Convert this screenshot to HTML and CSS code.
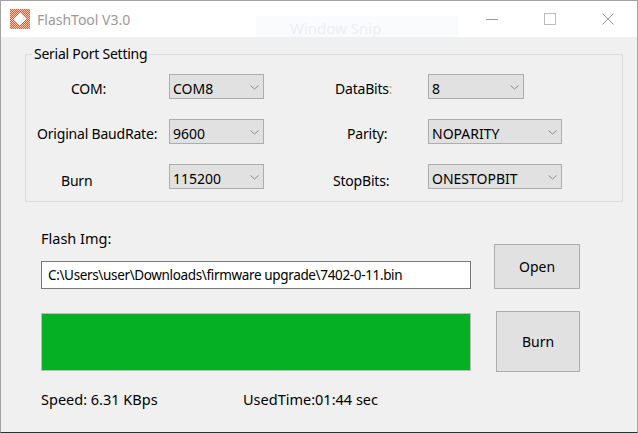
FILE: index.html
```html
<!DOCTYPE html>
<html lang="en">

<head>
    <meta charset="UTF-8">
    <title>FlashTool V3.0</title>
    <link rel="stylesheet" href="styles.css">
</head>

<body>
    <div class="window">
        <header class="titlebar">
            <svg class="app-icon" width="20" height="20" viewBox="0 0 20 20">
                <defs>
                    <pattern id="chk" width="2" height="2" patternUnits="userSpaceOnUse">
                        <rect width="2" height="2" fill="#f3c9b6"/>
                        <rect width="1" height="1" fill="#d0623f"/>
                        <rect x="1" y="1" width="1" height="1" fill="#d0623f"/>
                    </pattern>
                </defs>
                <rect x="0" y="0" width="20" height="20" fill="url(#chk)"/>
                <polygon points="10,3 17,10 10,17 3,10" fill="#fff" stroke="url(#chk)" stroke-width="1"/>
            </svg>
            <span class="title">FlashTool V3.0</span>
            <div class="snip">Window Snip</div>
            <div class="controls">
                <span class="ctl"><svg width="12" height="12" viewBox="0 0 12 12"><line x1="0" y1="6.5" x2="12" y2="6.5" stroke="#999" stroke-width="1"/></svg></span>
                <span class="ctl"><svg width="12" height="12" viewBox="0 0 12 12"><rect x="0.5" y="0.5" width="11" height="11" fill="none" stroke="#bbb" stroke-width="1"/></svg></span>
                <span class="ctl"><svg width="12" height="12" viewBox="0 0 12 12"><path d="M0.5 0.5 L11.5 11.5 M11.5 0.5 L0.5 11.5" stroke="#999" stroke-width="1"/></svg></span>
            </div>
        </header>

        <main class="client">
            <fieldset class="port">
                <legend>Serial Port Setting</legend>
                <div class="port-grid">
                    <span class="lbl l-com">COM:</span>
                    <div class="combo w-left">COM8<svg class="chev" width="9" height="5" viewBox="0 0 9 5"><polyline points="0.5,0.5 4.5,4 8.5,0.5" fill="none" stroke="#8a8a8a"/></svg></div>
                    <span class="lbl l-data">DataBits<span class="colon">:</span></span>
                    <div class="combo w-data">8<svg class="chev" width="9" height="5" viewBox="0 0 9 5"><polyline points="0.5,0.5 4.5,4 8.5,0.5" fill="none" stroke="#8a8a8a"/></svg></div>

                    <span class="lbl l-baud">Original BaudRate:</span>
                    <div class="combo w-left">9600<svg class="chev" width="9" height="5" viewBox="0 0 9 5"><polyline points="0.5,0.5 4.5,4 8.5,0.5" fill="none" stroke="#8a8a8a"/></svg></div>
                    <span class="lbl l-parity">Parity:</span>
                    <div class="combo w-wide">NOPARITY<svg class="chev" width="9" height="5" viewBox="0 0 9 5"><polyline points="0.5,0.5 4.5,4 8.5,0.5" fill="none" stroke="#8a8a8a"/></svg></div>

                    <span class="lbl l-burn low">Burn</span>
                    <div class="combo w-left">115200<svg class="chev" width="9" height="5" viewBox="0 0 9 5"><polyline points="0.5,0.5 4.5,4 8.5,0.5" fill="none" stroke="#8a8a8a"/></svg></div>
                    <span class="lbl l-stop low">StopBits:</span>
                    <div class="combo w-wide">ONESTOPBIT<svg class="chev" width="9" height="5" viewBox="0 0 9 5"><polyline points="0.5,0.5 4.5,4 8.5,0.5" fill="none" stroke="#8a8a8a"/></svg></div>
                </div>
            </fieldset>

            <section class="flash">
                <div class="flash-left">
                    <div class="flash-label">Flash Img:</div>
                    <div class="path">C:\Users\user\Downloads\firmware upgrade\7402-0-11.bin</div>
                    <div class="progress"><div class="bar" style="width: 100%"></div></div>
                    <div class="status">
                        <span class="speed">Speed: 6.31 KBps</span>
                        <span>UsedTime:01:44 sec</span>
                    </div>
                </div>
                <div class="flash-right">
                    <button class="btn btn-open">Open</button>
                    <button class="btn btn-burn">Burn</button>
                </div>
            </section>
        </main>
    </div>
</body>

</html>
```

FILE: styles.css
```css
/* General */
body {
    margin: 0;
    font-family: 'Noto Sans', 'Open Sans', sans-serif;
    font-size: 14px;
    color: #000;
}

.window {
    width: 638px;
    height: 433px;
    box-sizing: border-box;
    border: 1px solid #a3a3a3;
    border-bottom-color: #2f2f2f;
    display: flex;
    flex-direction: column;
    background-color: #f0f0f0;
}

/* Title bar */
.titlebar {
    height: 36px;
    flex: none;
    background-color: #fff;
    display: flex;
    align-items: center;
    position: relative;
}

.app-icon {
    margin-left: 9px;
}

.title {
    margin-left: 7px;
    font-size: 14px;
    color: #9a9a9a;
}

.snip {
    position: absolute;
    left: 255px;
    top: 15px;
    width: 202px;
    height: 21px;
    padding-left: 34px;
    box-sizing: border-box;
    background-color: #fafbfd;
    color: #eceef2;
    font-size: 15px;
    line-height: 24px;
}

.controls {
    margin-left: auto;
    display: flex;
    height: 100%;
}

.ctl {
    width: 58px;
    display: flex;
    align-items: center;
    justify-content: center;
}

/* Client area */
.client {
    flex: 1;
    padding: 9px 14px 0 24px;
}

.port {
    margin: 0;
    padding: 12px 0 12px 0;
    border: 1px solid #dcdcdc;
    min-width: 0;
}

.port legend {
    margin-left: 6px;
    padding: 0 2px;
    line-height: 16px;
    letter-spacing: -0.25px;
}

.port-grid {
    display: grid;
    grid-template-columns: 143px 95px 164px auto;
    grid-auto-rows: 25px;
    row-gap: 20px;
}

.lbl {
    align-self: center;
    white-space: nowrap;
    padding-top: 3px;
    letter-spacing: -0.2px;
}

.lbl.low {
    padding-top: 8px;
}

.l-com { padding-left: 45px; }
.l-baud { padding-left: 11px; }
.l-burn { padding-left: 35px; }
.l-data { padding-left: 71px; }
.l-parity { padding-left: 83px; }
.l-stop { padding-left: 69px; }

.colon {
    color: #d8a060;
}

.combo {
    height: 25px;
    box-sizing: border-box;
    border: 1px solid #adadad;
    background-color: #e1e1e1;
    display: flex;
    align-items: center;
    justify-content: space-between;
    padding: 3px 4px 0 3px;
    white-space: nowrap;
}

.chev {
    margin-top: -2px;
}

.w-left { width: 95px; }
.w-data { width: 96px; }
.w-wide { width: 134px; }

/* Flash section */
.flash {
    display: flex;
    margin-top: 27px;
    font-size: 14.5px;
}

.flash-left {
    margin-left: 16px;
    width: 430px;
}

.flash-label {
    line-height: 18px;
}

.path {
    margin-top: 14px;
    height: 28px;
    box-sizing: border-box;
    border: 1px solid #7a7a7a;
    background-color: #fff;
    padding-left: 6px;
    display: flex;
    align-items: center;
    white-space: nowrap;
    font-size: 13.5px;
    letter-spacing: -0.35px;
}

.progress {
    margin-top: 24px;
    height: 58px;
    box-sizing: border-box;
    border: 1px solid #bcbcbc;
    background-color: #e6e6e6;
}

.bar {
    height: 100%;
    background-color: #06b025;
}

.status {
    margin-top: 19px;
    line-height: 18px;
    display: flex;
}

.speed {
    width: 202px;
}

.flash-right {
    display: flex;
    flex-direction: column;
    align-items: flex-start;
    margin-top: 15px;
}

.btn {
    font-family: inherit;
    font-size: 14px;
    color: #000;
    background-color: #e1e1e1;
    border: 1px solid #adadad;
    padding: 0;
}

.btn-open {
    margin-left: 23px;
    width: 86px;
    height: 45px;
}

.btn-burn {
    margin-top: 22px;
    margin-left: 25px;
    width: 84px;
    height: 61px;
}
```
